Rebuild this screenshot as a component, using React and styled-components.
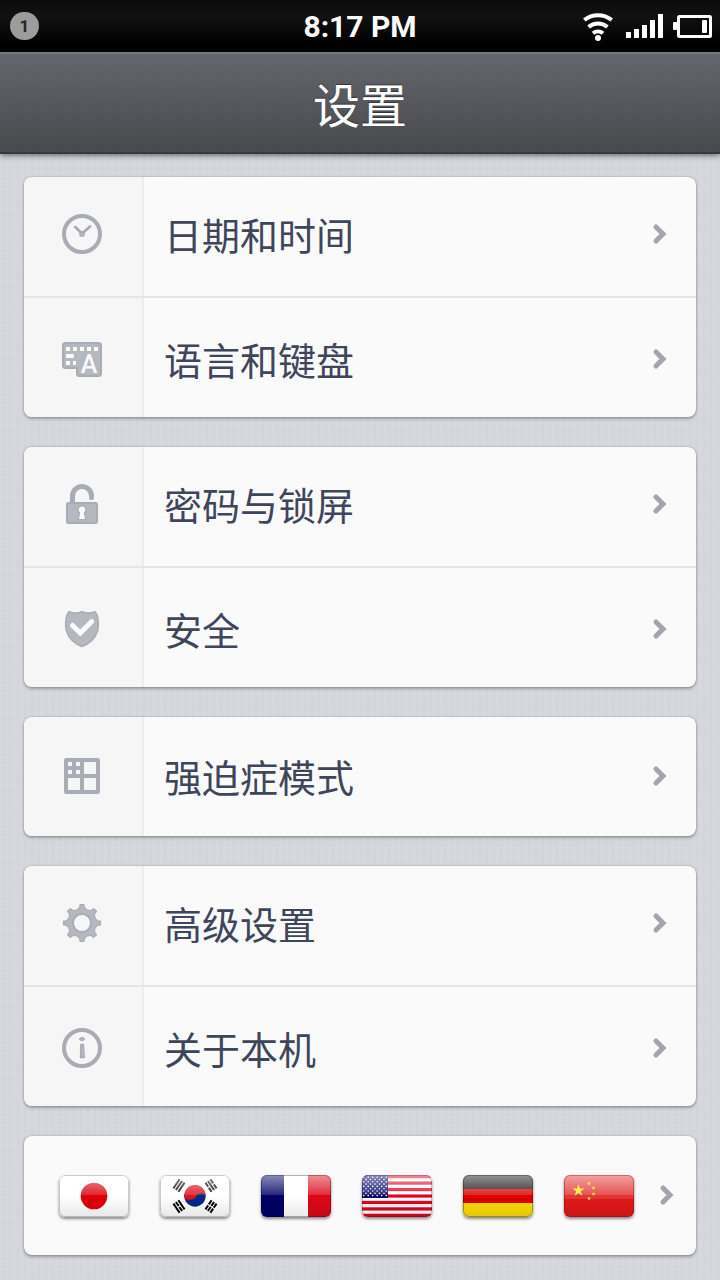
import styled, { createGlobalStyle, ThemeProvider } from "styled-components";

const theme = {
  text: "#40465a",
  icon: "#a9acb4",
  iconFill: "#b6b8c0",
  chevron: "#a2a5ac",
  card: "#fafafa",
  cell: "#f6f6f7",
  line: "#e5e5e6",
};

const GlobalStyle = createGlobalStyle`
  * {
    box-sizing: border-box;
  }
  body {
    margin: 0;
    font-family: Roboto, "Noto Sans CJK SC", sans-serif;
    background-color: #d5d7dd;
    background-image:
      repeating-linear-gradient(90deg, rgba(255, 255, 255, 0.06) 0 1px, transparent 1px 3px, rgba(120, 125, 150, 0.02) 3px 5px, transparent 5px 7px),
      repeating-linear-gradient(0deg, rgba(255, 255, 255, 0.06) 0 1px, transparent 1px 4px, rgba(120, 125, 150, 0.02) 4px 5px, transparent 5px 9px);
  }
`;

const StatusBar = styled.div`
  display: grid;
  grid-template-columns: 1fr auto 1fr;
  align-items: center;
  height: 52px;
  padding: 0 8px;
  color: white;
  background: linear-gradient(#0a0a0a, #121212 30%, #000 85%);
`;

const Badge = styled.span`
  display: flex;
  align-items: center;
  justify-content: center;
  width: 29px;
  height: 28px;
  margin-left: 2px;
  border-radius: 14px;
  background-color: #9c9c9c;
  color: #262626;
  font-size: 17px;
  font-weight: 700;
`;

const Clock = styled.time`
  padding-top: 2px;
  font-size: 30px;
  line-height: 36px;
  font-weight: 700;
`;

const StatusIcons = styled.div`
  display: flex;
  justify-content: flex-end;
  gap: 10px;
`;

const Header = styled.header`
  display: flex;
  align-items: center;
  justify-content: center;
  height: 102px;
  padding-top: 8px;
  border-top: 2px solid #76777d;
  border-bottom: 2px solid #38393d;
  background-image:
    repeating-linear-gradient(90deg, rgba(255, 255, 255, 0.01) 0 1px, transparent 1px 5px),
    linear-gradient(#63666c, #48494d);
  box-shadow: 0 1px 6px rgba(0, 0, 0, 0.6);
`;

const Title = styled.h1`
  margin: 0;
  color: white;
  font-size: 47px;
  line-height: 60px;
  font-weight: 400;
  text-shadow: 0 -1px 1px rgba(0, 0, 0, 0.4);
`;

const Content = styled.main`
  display: flex;
  flex-direction: column;
  gap: 30px;
  padding: 23px 24px 25px;
`;

const Card = styled.section`
  overflow: hidden;
  border-radius: 8px;
  background-color: ${(props) => props.theme.card};
  box-shadow: 0 0 2px rgba(60, 60, 80, 0.45), 0 2px 3px rgba(60, 60, 70, 0.35);
`;

const IconCell = styled.span`
  display: flex;
  align-items: center;
  justify-content: center;
  align-self: stretch;
  width: 120px;
  padding: 0 2px 2px 0;
  border-right: 2px solid #ededee;
  background-color: ${(props) => props.theme.cell};
`;

const Label = styled.span`
  flex: 1;
  padding: 4px 0 0 20px;
  font-size: 38px;
  line-height: 56px;
  font-weight: 400;
`;

const ChevronIcon = styled.svg`
  width: 24px;
  height: 24px;
  margin-bottom: 2px;
  fill: none;
  stroke: ${(props) => props.theme.chevron};
  stroke-width: 5;
  stroke-linecap: round;
`;

const Row = styled.a`
  display: flex;
  align-items: center;
  height: 119px;
  padding-right: 24px;
  color: ${(props) => props.theme.text};
  text-decoration: none;

  /* contents of paired rows sit slightly away from the divider */
  &:not(:last-child) {
    height: 121px;
    border-bottom: 2px solid ${(props) => props.theme.line};
  }
  &:not(:last-child) > ${IconCell} {
    padding-bottom: 6px;
  }
  &:not(:last-child) > ${Label} {
    margin-bottom: 4px;
  }
  &:not(:last-child) > ${ChevronIcon} {
    margin-bottom: 6px;
  }
  &:not(:first-child) > ${IconCell} {
    padding-top: 4px;
  }
  &:not(:first-child) > ${Label}, &:not(:first-child) > ${ChevronIcon} {
    margin-top: 4px;
  }
`;

const Icon = styled.svg`
  width: 40px;
  height: 40px;
  fill: ${(props) => props.theme.iconFill};
  stroke: ${(props) => props.theme.icon};
`;

const FlagRow = styled.a`
  display: flex;
  align-items: center;
  gap: 21px;
  height: 119px;
  padding: 0 17px 0 35px;
`;

const Flags = styled.span`
  display: flex;
  flex: 1;
  justify-content: space-between;
`;

const FlagFrame = styled.svg`
  display: block;
  width: 70px;
  height: 42px;
  overflow: hidden;
  border-radius: 6px;
  box-shadow: 0 2px 3px rgba(0, 0, 0, 0.45);
`;

const Chevron = () => (
  <ChevronIcon viewBox="0 0 24 24" aria-hidden="true">
    <path d="M8 5L15 12L8 19" />
  </ChevronIcon>
);

const ClockIcon = () => (
  <Icon viewBox="0 0 40 40">
    <circle cx="20" cy="20" r="18" fill="none" strokeWidth="4" />
    <path d="M13.3 13L20 19.5L28 12.5" fill="none" strokeWidth="2.8" strokeLinecap="round" />
    <rect x="18" y="18" width="4" height="4" rx="1" strokeWidth="1.5" />
  </Icon>
);

const KeyboardIcon = () => (
  <Icon viewBox="0 0 40 40">
    <path
      d="M3.5 4H36.5Q39 4 39 6.5V34.5Q39 37 36.5 37H17.5Q15 37 15 34.5V29H3.5Q1 29 1 26.5V6.5Q1 4 3.5 4Z"
      strokeWidth="2"
    />
    <g fill="#fafafa" stroke="none">
      {[4, 11, 18, 25, 32].map((x) => (
        <rect key={x} x={x} y="8" width="4" height="4" />
      ))}
      <rect x="4" y="15" width="8" height="4" />
      <rect x="4" y="22" width="4" height="4" />
      <rect x="11" y="22" width="3" height="4" />
      <text
        x="27"
        y="34"
        fontSize="25"
        fontWeight="500"
        textAnchor="middle"
        fontFamily="Roboto, sans-serif"
      >
        A
      </text>
    </g>
  </Icon>
);

const LockIcon = () => (
  <Icon viewBox="0 0 40 40">
    <path
      d="M10.5 20V12a9.5 9.5 0 0 1 19 0V13.5"
      fill="none"
      strokeWidth="5"
      strokeLinecap="round"
    />
    <rect x="5" y="19" width="30" height="20" rx="1.5" strokeWidth="2" />
    <path
      d="M18.2 28.5A3.3 3.3 0 1 1 21.8 28.5L23 35H17Z"
      fill="#fafafa"
      strokeWidth="2.5"
      paintOrder="stroke"
    />
  </Icon>
);

const ShieldIcon = () => (
  <Icon viewBox="0 0 40 40">
    <path
      d="M7 2.8Q13.5 5.5 20 2.8Q26.5 5.5 33 2.8L35 6Q37.5 15 35.5 22Q32 33 20 37.5Q8 33 4.5 22Q2.5 15 5 6Z"
      strokeWidth="1.6"
    />
    <path
      d="M10.5 16.5L18.3 24L29.7 12.5"
      fill="none"
      stroke="#fafafa"
      strokeWidth="5"
      strokeLinecap="round"
    />
  </Icon>
);

const GridIcon = () => (
  <Icon viewBox="0 0 40 40">
    <g fill="none" strokeWidth="4">
      <rect x="4" y="4" width="32" height="32" rx="0.5" />
      <path d="M20 4V36M4 20H36M12 4V20M4 12H20" />
    </g>
  </Icon>
);

const toothPoint = (deg) => {
  const rad = (deg * Math.PI) / 180;
  return `${(20 + 18.6 * Math.sin(rad)).toFixed(2)} ${(20 - 18.6 * Math.cos(rad)).toFixed(2)}`;
};

const gearPath =
  [0, 45, 90, 135, 180, 225, 270, 315]
    .map((a, i) => {
      const start = i === 0 ? `M${toothPoint(a - 6)}` : "";
      return `${start}L${toothPoint(a + 6)}A5.6 5.6 0 0 0 ${toothPoint(a + 39)}`;
    })
    .join("") + "Z";

const GearIcon = () => (
  <Icon viewBox="0 0 40 40">
    <path d={gearPath} strokeWidth="1.2" strokeLinejoin="round" />
    <circle cx="20" cy="20" r="9" fill="#f6f6f7" strokeWidth="2" />
  </Icon>
);

const InfoIcon = () => (
  <Icon viewBox="0 0 40 40">
    <circle cx="20" cy="20" r="18" fill="none" strokeWidth="4" />
    <ellipse cx="20" cy="11" rx="2.5" ry="1.5" strokeWidth="1" />
    <path d="M18.8 16.5H21.4L22.2 29.5H18.5Z" strokeWidth="1.4" strokeLinejoin="round" />
  </Icon>
);

const Flag = ({ name, edge = "rgba(0, 0, 0, 0.3)", emblem, children }) => (
  <FlagFrame viewBox="0 0 70 42" role="img" aria-label={name}>
    <defs>
      <linearGradient id={`gloss-${name}`} x1="0" y1="0" x2="0" y2="1">
        <stop offset="0" stopColor="#fff" stopOpacity="0.55" />
        <stop offset="1" stopColor="#fff" stopOpacity="0.15" />
      </linearGradient>
      <linearGradient id={`shade-${name}`} x1="0" y1="0" x2="0" y2="1">
        <stop offset="0" stopColor="#000" stopOpacity="0" />
        <stop offset="1" stopColor="#000" stopOpacity="0.09" />
      </linearGradient>
    </defs>
    {children}
    <rect y="21" width="70" height="21" fill={`url(#shade-${name})`} />
    <rect width="70" height="20" fill={`url(#gloss-${name})`} />
    {emblem}
    <rect x="0.5" y="0.5" width="69" height="41" rx="5.5" fill="none" stroke={edge} />
  </FlagFrame>
);

const Japan = () => (
  <Flag name="日本" edge="rgba(0, 0, 0, 0.2)">
    <rect width="70" height="42" fill="#fff" />
    <circle cx="35" cy="21" r="13.3" fill="#dc0008" />
  </Flag>
);

// true marks a broken bar
const trigrams = [
  { x: 19, y: 10.5, angle: 34, broken: [false, false, false] },
  { x: 51, y: 10.5, angle: -34, broken: [true, false, true] },
  { x: 19, y: 31.5, angle: -34, broken: [false, true, false] },
  { x: 51, y: 31.5, angle: 34, broken: [true, true, true] },
];

const Korea = () => (
  <Flag name="한국" edge="rgba(0, 0, 0, 0.2)">
    <rect width="70" height="42" fill="#fff" />
    {trigrams.map((t) => (
      <g
        key={`${t.x}-${t.y}`}
        transform={`translate(${t.x} ${t.y}) rotate(${t.angle})`}
        stroke="#000"
        strokeWidth="2"
      >
        {t.broken.map((broken, i) => (
          <path
            key={i}
            d={broken ? "M0 -5.5V-0.6M0 0.6V5.5" : "M0 -5.5V5.5"}
            transform={`translate(${(i - 1) * 3} 0)`}
          />
        ))}
      </g>
    ))}
    <circle cx="35" cy="21" r="10.7" fill="#002a86" />
    <path
      d="M24.6 23.5A10.7 10.7 0 1 1 45.6 20C43 17.5 38.5 17.5 36 21.5C33.5 25.5 28 25.5 24.6 23.5Z"
      fill="#e0111b"
    />
  </Flag>
);

const France = () => (
  <Flag name="France" edge="rgba(0, 0, 40, 0.3)">
    <rect width="23" height="42" fill="#000066" />
    <rect x="23" width="24" height="42" fill="#fff" />
    <rect x="47" width="23" height="42" fill="#dc0818" />
  </Flag>
);

const starRows = [0, 1, 2, 3, 4, 5, 6, 7, 8];

const Usa = () => (
  <Flag name="USA" edge="rgba(60, 0, 20, 0.25)">
    <rect width="70" height="42" fill="#fff" />
    {[0, 1, 2, 3, 4, 5, 6].map((i) => (
      <rect key={i} y={i * 6.46} width="70" height="3.23" fill="#e3001f" />
    ))}
    <rect width="26" height="23" fill="#000066" />
    {starRows.map((row) =>
      (row % 2 ? [4, 8.5, 13, 17.5, 22] : [1.8, 6.2, 10.7, 15.2, 19.7, 24.2]).map((x) => (
        <circle key={`${row}-${x}`} cx={x} cy={2.2 + row * 2.3} r="0.8" fill="#fff" />
      ))
    )}
  </Flag>
);

const Germany = () => (
  <Flag name="Deutschland">
    <rect width="70" height="14" fill="#141414" />
    <rect y="14" width="70" height="14" fill="#dd0000" />
    <rect y="28" width="70" height="14" fill="#fadb05" />
  </Flag>
);

const STAR = "M0 -1L0.225 -0.309H0.951L0.363 0.118L0.588 0.809L0 0.382L-0.588 0.809L-0.363 0.118L-0.951 -0.309H-0.225Z";

const smallStars = [
  [25, 8.5],
  [29.5, 13],
  [29.5, 19],
  [25, 23.5],
];

const ChinaStars = () => (
  <g fill="#fff04a">
    <path d={STAR} transform="translate(14.5 15.5) scale(6.4)" />
    {smallStars.map(([x, y]) => (
      <path key={y} d={STAR} transform={`translate(${x} ${y}) scale(2.2)`} />
    ))}
  </g>
);

const China = () => (
  <Flag name="中国" edge="rgba(120, 0, 0, 0.35)" emblem={<ChinaStars />}>
    <rect width="70" height="42" fill="#e01818" />
    <rect width="70" height="24" fill="#fff" opacity="0.12" />
  </Flag>
);

const groups = [
  [
    { id: "date", label: "日期和时间", icon: ClockIcon },
    { id: "language", label: "语言和键盘", icon: KeyboardIcon },
  ],
  [
    { id: "lock", label: "密码与锁屏", icon: LockIcon },
    { id: "security", label: "安全", icon: ShieldIcon },
  ],
  [{ id: "ocd", label: "强迫症模式", icon: GridIcon }],
  [
    { id: "advanced", label: "高级设置", icon: GearIcon },
    { id: "about", label: "关于本机", icon: InfoIcon },
  ],
];

function App() {
  return (
    <ThemeProvider theme={theme}>
      <GlobalStyle />
      <StatusBar>
        <Badge>1</Badge>
        <Clock>8:17 PM</Clock>
        <StatusIcons>
          <svg width="32" height="30" viewBox="0 0 32 30" fill="none" stroke="#fff" strokeWidth="4">
            <path d="M1.3 9A22 22 0 0 1 28.7 9" />
            <path d="M5.6 16A14.5 14.5 0 0 1 24.4 16" />
            <path d="M10 22.3A8 8 0 0 1 20 22.3" />
            <circle cx="15" cy="27" r="3" fill="#fff" stroke="none" />
          </svg>
          <svg width="38" height="30" viewBox="0 0 38 30" fill="#fff">
            <rect x="1" y="21" width="5" height="6" />
            <rect x="9" y="18" width="5" height="9" />
            <rect x="17" y="14" width="5" height="13" />
            <rect x="25" y="9" width="5" height="18" />
            <rect x="33" y="3" width="5" height="24" />
          </svg>
          <svg width="39" height="30" viewBox="0 0 39 30" fill="#fff">
            <rect y="11" width="5" height="8" rx="1" />
            <rect
              x="5.5"
              y="5.5"
              width="32"
              height="20"
              rx="1"
              fill="none"
              stroke="#fff"
              strokeWidth="3"
            />
            <rect x="29" y="9" width="5" height="13" rx="1" />
          </svg>
        </StatusIcons>
      </StatusBar>
      <Header>
        <Title>设置</Title>
      </Header>
      <Content>
        {groups.map((rows) => (
          <Card key={rows[0].id}>
            {rows.map(({ id, label, icon: RowIcon }) => (
              <Row key={id} href={`#${id}`}>
                <IconCell>
                  <RowIcon />
                </IconCell>
                <Label>{label}</Label>
                <Chevron />
              </Row>
            ))}
          </Card>
        ))}
        <Card>
          <FlagRow href="#region">
            <Flags>
              <Japan />
              <Korea />
              <France />
              <Usa />
              <Germany />
              <China />
            </Flags>
            <Chevron />
          </FlagRow>
        </Card>
      </Content>
    </ThemeProvider>
  );
}

export default App;
